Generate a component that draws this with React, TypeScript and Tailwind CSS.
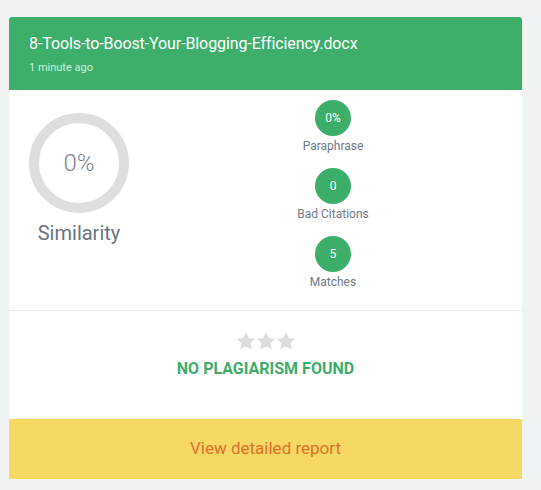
import React from "react";

const Star = () => (
  <svg width="20" height="20" viewBox="0 0 24 24" className="block">
    <path
      d="M12 1.5l3.4 6.8 7.5 1.1-5.4 5.3 1.3 7.5L12 18.7l-6.8 3.5 1.3-7.5-5.4-5.3 7.5-1.1z"
      fill="#dcdcdc"
    />
  </svg>
);

const Stat = ({ value, label }: { value: string; label: string }) => (
  <div className="flex flex-col items-center">
    <div className="w-[36px] h-[36px] rounded-full bg-[#3cae6a] flex items-center justify-center text-white text-[12px]">
      {value}
    </div>
    <div className="mt-[2px] h-[16px] leading-[16px] text-[12px] text-[#6f7886]">{label}</div>
  </div>
);

export default function App() {
  return (
    <div
      className="w-[541px] h-[490px] bg-[#eff3f4] pt-[17px] pl-[9px]"
      style={{ fontFamily: "Roboto, 'Noto Sans', sans-serif" }}
    >
      <div className="w-[513px] bg-white rounded-t-[3px] overflow-hidden">
        <div className="h-[73px] bg-[#3daf6b] px-[20px] pt-[17px]">
          <div className="text-white text-[16px] leading-[20px] tracking-[-0.1px]">
            8-Tools-to-Boost-Your-Blogging-Efficiency.docx
          </div>
          <div className="text-[#cdeedb] text-[11px] leading-[14px] mt-[7px]">1 minute ago</div>
        </div>
        <div className="h-[221px] flex border-b border-[#ebebeb]">
          <div className="w-[140px] flex flex-col items-center pt-[23px]">
            <div className="w-[100px] h-[100px] rounded-full border-[10px] border-[#dedede] flex items-center justify-center">
              <span className="text-[24px] font-light text-[#7a8594]">0%</span>
            </div>
            <div className="mt-[8px] text-[20px] leading-[24px] text-[#6b7480]">Similarity</div>
          </div>
          <div className="w-[368px] flex flex-col items-center pt-[10px] gap-[14px]">
            <Stat value="0%" label="Paraphrase" />
            <Stat value="0" label="Bad Citations" />
            <Stat value="5" label="Matches" />
          </div>
        </div>
        <div className="h-[108px] flex flex-col items-center pt-[20px]">
          <div className="flex">
            <Star />
            <Star />
            <Star />
          </div>
          <div className="mt-[9px] text-[16px] leading-[18px] font-bold text-[#3cae6a]">
            NO PLAGIARISM FOUND
          </div>
        </div>
        <div className="h-[60px] bg-[#f5d964] flex items-center justify-center text-[17px] text-[#e0702a]">
          View detailed report
        </div>
      </div>
    </div>
  );
}
